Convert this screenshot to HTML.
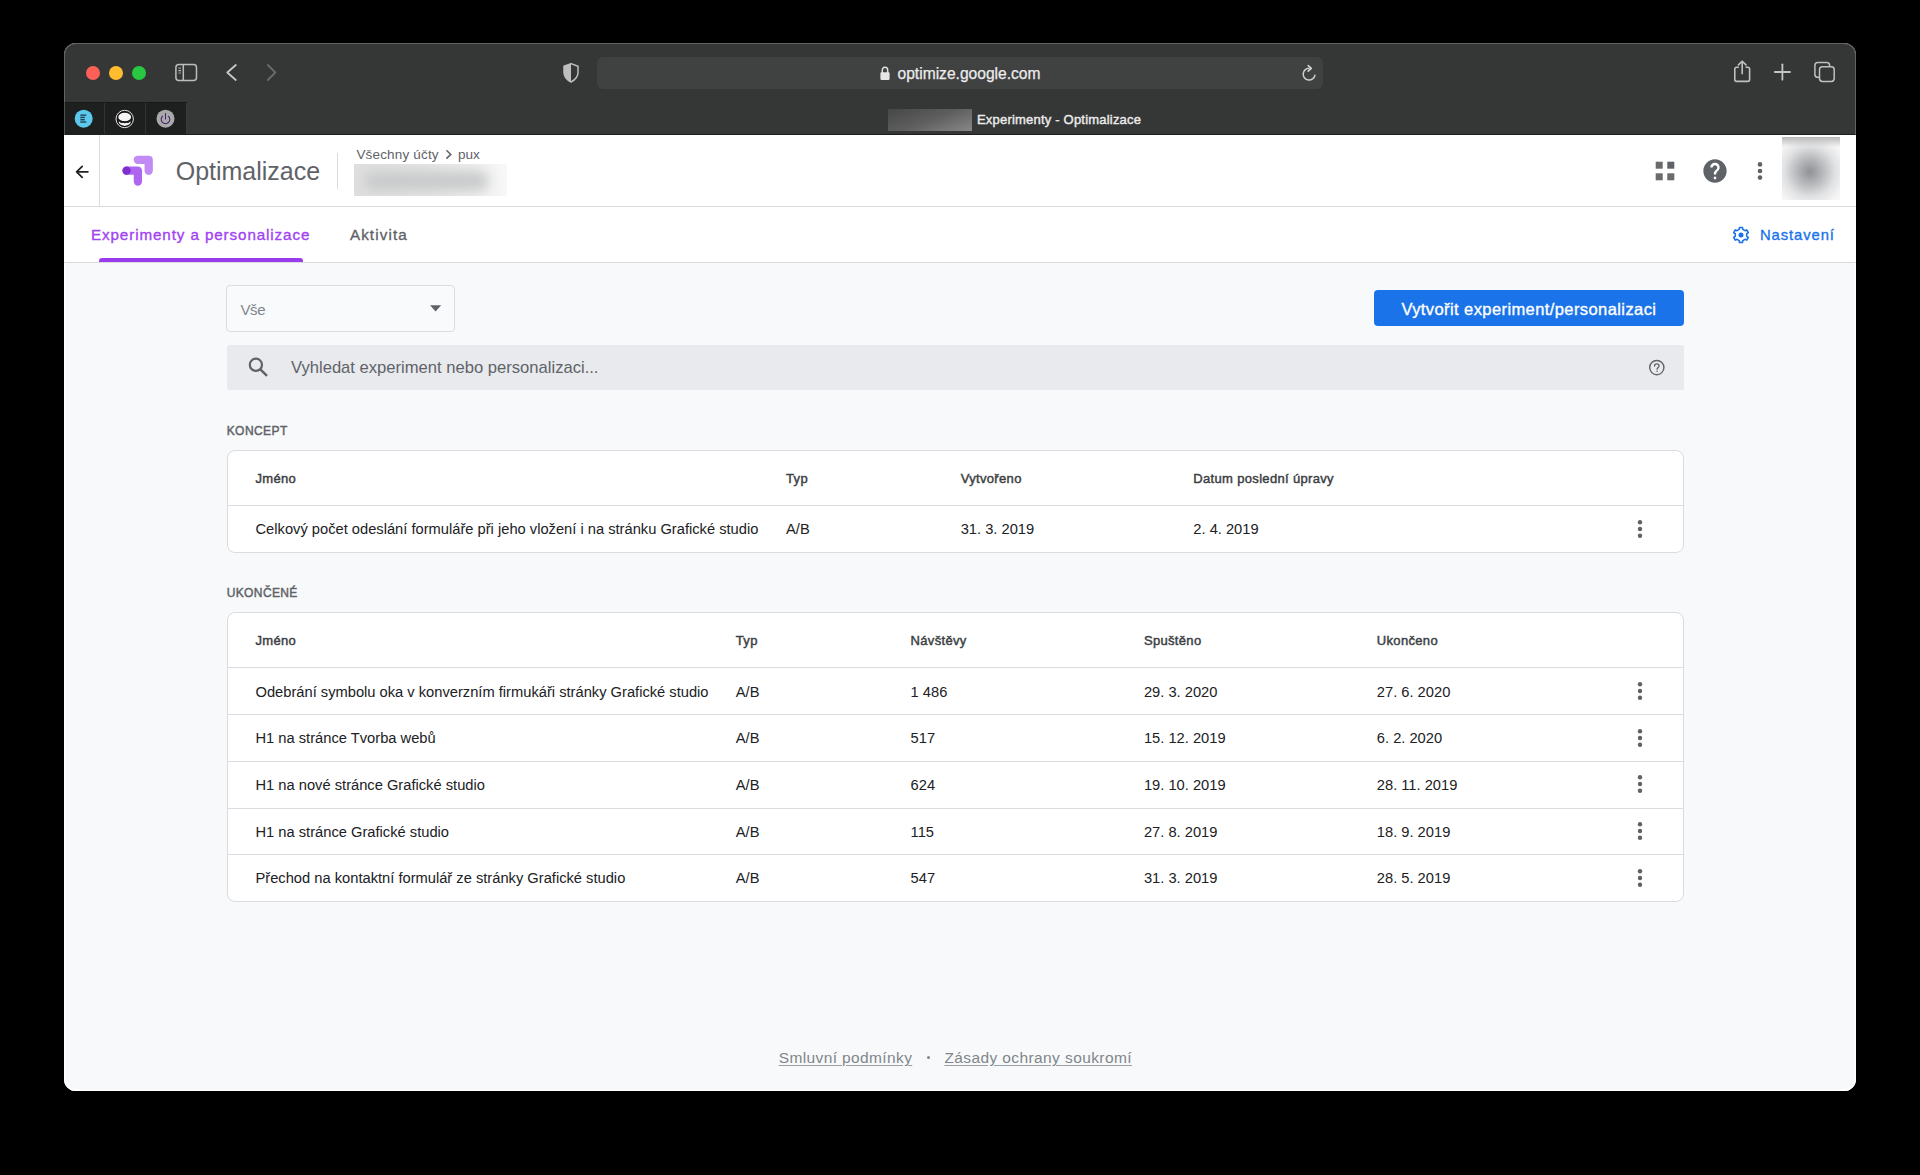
<!DOCTYPE html>
<html><head><meta charset="utf-8">
<style>
*{box-sizing:border-box;margin:0;padding:0}
html,body{width:1920px;height:1175px;background:#000;overflow:hidden;font-family:"Liberation Sans",sans-serif}
.abs{position:absolute}
.t{position:absolute;white-space:nowrap;line-height:1}
#win{position:absolute;left:0;top:0;width:1920px;height:1175px;clip-path:inset(43px 64px 84px 64px round 12px);background:#f8f9fa}
</style></head><body>
<div id="win">
<div class="abs" style="left:64px;top:43px;width:1792px;height:92px;background:#353636"></div>
<div class="abs" style="left:64px;top:134px;width:1792px;height:1px;background:#1c1c1c"></div>
<div class="abs" style="left:86.4px;top:66px;width:14px;height:14px;border-radius:50%;background:#fe5f57"></div>
<div class="abs" style="left:109.2px;top:66px;width:14px;height:14px;border-radius:50%;background:#febc2e"></div>
<div class="abs" style="left:132px;top:66px;width:14px;height:14px;border-radius:50%;background:#28c840"></div>
<svg class="abs" style="left:170px;top:58px" width="32" height="28" viewBox="0 0 32 28">
<rect x="5.9" y="6.4" width="20.6" height="16.2" rx="3" fill="none" stroke="#bdbdbd" stroke-width="1.5"/>
<line x1="13.3" y1="6.4" x2="13.3" y2="22.6" stroke="#bdbdbd" stroke-width="1.5"/>
<line x1="8.4" y1="10.2" x2="11" y2="10.2" stroke="#9a9a9a" stroke-width="1.2"/>
<line x1="8.4" y1="12.6" x2="11" y2="12.6" stroke="#bdbdbd" stroke-width="1.2"/>
<line x1="8.4" y1="15" x2="11" y2="15" stroke="#9a9a9a" stroke-width="1.2"/>
</svg>
<svg class="abs" style="left:220px;top:58px" width="64" height="28" viewBox="0 0 64 28">
<polyline points="15.8,7 7.3,14.5 15.8,22" fill="none" stroke="#c8c8c8" stroke-width="1.8" stroke-linecap="round" stroke-linejoin="round"/>
<polyline points="47.8,7 55.3,14.5 47.8,22" fill="none" stroke="#6b6b6b" stroke-width="1.8" stroke-linecap="round" stroke-linejoin="round"/>
</svg>
<svg class="abs" style="left:560px;top:60px" width="22" height="26" viewBox="0 0 22 26">
<path d="M11 3.6 L18 6.2 V12.5 C18 17 14.8 20 11 22 C7.2 20 4 17 4 12.5 V6.2 Z" fill="none" stroke="#bebebe" stroke-width="1.5" stroke-linejoin="round"/>
<path d="M11 3.6 L4 6.2 V12.5 C4 17 7.2 20 11 22 Z" fill="#bebebe"/>
</svg>
<div class="abs" style="left:597px;top:57px;width:726px;height:32px;border-radius:6px;background:#404141"></div>
<svg class="abs" style="left:878px;top:64px" width="14" height="18" viewBox="0 0 14 18">
<path d="M4.3 9 V6.2 C4.3 4.4 5.5 3.3 7 3.3 C8.5 3.3 9.7 4.4 9.7 6.2 V9" fill="none" stroke="#e0e0e0" stroke-width="1.5"/>
<rect x="2.4" y="8.3" width="9.2" height="7.7" rx="1.2" fill="#e6e6e6"/>
</svg>
<div class="t" style="left:897.5px;top:66.09px;font-size:15.6px;color:#ececec;-webkit-text-stroke:0.25px #ececec;">optimize.google.com</div>
<svg class="abs" style="left:1299px;top:64px" width="20" height="20" viewBox="0 0 20 20">
<path d="M15.9 11.3 A5.9 5.9 0 1 1 10.1 4.3" fill="none" stroke="#d0d0d0" stroke-width="1.5" stroke-linecap="round"/>
<path d="M9.2 1.5 L12.3 4.3 L9.2 7.1" fill="none" stroke="#d8d8d8" stroke-width="1.6" stroke-linecap="round" stroke-linejoin="round"/>
</svg>
<svg class="abs" style="left:1728px;top:56px" width="120" height="30" viewBox="0 0 120 30">
<path d="M10.9 11.3 H8.6 C7.4 11.3 6.8 11.9 6.8 13.1 V23.6 C6.8 24.8 7.4 25.4 8.6 25.4 H19.8 C21 25.4 21.6 24.8 21.6 23.6 V13.1 C21.6 11.9 21 11.3 19.8 11.3 H17.5" fill="none" stroke="#c0c0c0" stroke-width="1.6"/>
<line x1="14.2" y1="5.6" x2="14.2" y2="18.3" stroke="#c0c0c0" stroke-width="1.6"/>
<polyline points="10.4,8.9 14.2,5.2 18,8.9" fill="none" stroke="#c0c0c0" stroke-width="1.6" stroke-linecap="round" stroke-linejoin="round"/>
<line x1="54.4" y1="8.3" x2="54.4" y2="23.7" stroke="#c4c4c4" stroke-width="1.8" stroke-linecap="round"/>
<line x1="46.8" y1="16" x2="62" y2="16" stroke="#c4c4c4" stroke-width="1.8" stroke-linecap="round"/>
<path d="M91.5 21.3 H89.8 C87.8 21.3 86.9 20.3 86.9 18.4 V9.4 C86.9 7.5 87.8 6.5 89.8 6.5 H98.7 C100.6 6.5 101.6 7.5 101.6 9.4 V11" fill="none" stroke="#c0c0c0" stroke-width="1.5"/>
<rect x="91.5" y="10.8" width="14.7" height="14.7" rx="2.9" fill="none" stroke="#c0c0c0" stroke-width="1.5"/>
</svg>
<div class="abs" style="left:64px;top:102px;width:123px;height:33px;background:#1e1f1f;border-top:1px solid #181818"></div>
<div class="abs" style="left:104px;top:103px;width:1px;height:31px;background:#333"></div>
<div class="abs" style="left:145px;top:103px;width:1px;height:31px;background:#333"></div>
<div class="abs" style="left:186px;top:103px;width:1px;height:31px;background:#3a3a3a"></div>
<svg class="abs" style="left:74px;top:109px" width="20" height="20" viewBox="0 0 20 20">
<circle cx="9.7" cy="9.7" r="9" fill="#5bc8ec"/>
<rect x="6.3" y="5.5" width="6" height="1.3" fill="#1d3a4a"/><rect x="6.3" y="7.8" width="4.5" height="1.3" fill="#1d3a4a"/>
<rect x="6.3" y="10.1" width="4.5" height="1.3" fill="#1d3a4a"/><rect x="6.3" y="12.4" width="6" height="1.3" fill="#1d3a4a"/>
</svg>
<svg class="abs" style="left:114px;top:109px" width="22" height="20" viewBox="0 0 22 20">
<circle cx="10.7" cy="10" r="8.7" fill="#151515" stroke="#e0e0e0" stroke-width="1"/>
<ellipse cx="10.7" cy="8" rx="6.4" ry="4.3" fill="#f4f4f4"/>
<path d="M4.6 12.6 Q10.7 15 16.8 12.6 Q16.4 16.2 10.7 17 Q5 16.2 4.6 12.6 Z" fill="#f0f0f0"/>
<path d="M6 13.2 Q7.5 14.6 9 13.6 Q10.6 14.8 12.3 13.6 Q14 14.6 15.4 13.2 L15.4 12.6 L6 12.6 Z" fill="#151515"/>
</svg>
<svg class="abs" style="left:155px;top:109px" width="20" height="20" viewBox="0 0 20 20">
<circle cx="10.5" cy="9.7" r="9" fill="#a9a9a9"/>
<path d="M7.6 7.2 A4.3 4.3 0 1 0 13.4 7.2" fill="none" stroke="#43266a" stroke-width="1.05" stroke-linecap="round"/>
<line x1="10.5" y1="4.4" x2="10.5" y2="10" stroke="#43266a" stroke-width="1.05" stroke-linecap="round"/>
</svg>
<div class="abs" style="left:888px;top:109px;width:84px;height:22px;background:linear-gradient(160deg,#474747 0%,#5e5e5e 50%,#888 100%);filter:blur(0.6px)"></div>
<div class="t" style="left:977.0px;top:112.60px;font-size:13px;color:#ececec;letter-spacing:0.2px;-webkit-text-stroke:0.4px #ececec;">Experimenty - Optimalizace</div>
<div class="abs" style="left:64px;top:135px;width:1792px;height:72px;background:#fff;border-bottom:1px solid #dadce0"></div>
<div class="abs" style="left:99px;top:135px;width:1px;height:71px;background:#dadce0"></div>
<svg class="abs" style="left:70px;top:160px" width="24" height="24" viewBox="0 0 24 24">
<path d="M17.9 11.8 H6.6 M12.2 6.3 L6.6 11.8 L12.2 17.4" fill="none" stroke="#202124" stroke-width="1.7" stroke-linecap="round" stroke-linejoin="round"/>
</svg>
<svg class="abs" style="left:115px;top:150px" width="45" height="42" viewBox="115 150 45 42">
<path d="M137.8 159.8 H148.7 V170.7" fill="none" stroke="#c18af4" stroke-width="8.3" stroke-linecap="round" stroke-linejoin="round"/>
<path d="M126.5 170.7 H137.9 V181.5" fill="none" stroke="#ae66f1" stroke-width="8.3" stroke-linecap="round" stroke-linejoin="round"/>
<circle cx="126.6" cy="170.6" r="4.15" fill="#7f2fcf"/>
</svg>
<div class="t" style="left:175.7px;top:158.84px;font-size:25px;color:#5f6368;">Optimalizace</div>
<div class="abs" style="left:337px;top:153px;width:1px;height:36px;background:#dadce0"></div>
<div class="t" style="left:356.4px;top:147.87px;font-size:13.5px;color:#5f6368;letter-spacing:0.17px;">Všechny účty</div>
<svg class="abs" style="left:444px;top:148px" width="10" height="13" viewBox="0 0 10 13"><polyline points="2.4,2.2 6.8,6.4 2.4,10.6" fill="none" stroke="#5f6368" stroke-width="1.5"/></svg>
<div class="t" style="left:458.0px;top:147.87px;font-size:13.5px;color:#5f6368;">pux</div>
<div class="abs" style="left:354px;top:164px;width:153px;height:32px;overflow:hidden;background:linear-gradient(90deg,#dedede 0%,#e6e6e6 50%,#f0f0f0 80%,#f8f8f8 100%)"><div style="position:absolute;left:10px;top:7px;width:125px;height:20px;border-radius:10px;background:#cacbcc;filter:blur(6px)"></div></div>
<svg class="abs" style="left:1652px;top:158px" width="26" height="26" viewBox="0 0 26 26">
<rect x="3.7" y="3.7" width="7" height="7" fill="#6b6b6b"/><rect x="15.3" y="3.7" width="7" height="7" fill="#5f6368"/>
<rect x="3.7" y="15.3" width="7" height="7" fill="#6b6b6b"/><rect x="15.3" y="15.3" width="7" height="7" fill="#6b6b6b"/>
</svg>
<svg class="abs" style="left:1701px;top:156.7px" width="28" height="28" viewBox="0 0 24 24"><path fill="#5f6368" d="M12 2C6.48 2 2 6.48 2 12s4.48 10 10 10 10-4.48 10-10S17.52 2 12 2zm1 17h-2v-2h2v2zm2.07-7.750l-.9.92C13.450 12.9 13 13.5 13 15h-2v-.5c0-1.1.45-2.1 1.17-2.83l1.24-1.26c.37-.36.59-.86.59-1.41 0-1.1-.9-2-2-2s-2 .9-2 2H8c0-2.21 1.79-4 4-4s4 1.79 4 4c0 .88-.36 1.68-.93 2.25z"/></svg>
<svg class="abs" style="left:1756.30px;top:160.00px" width="8" height="22" viewBox="0 0 8 22"><circle cx="4" cy="4.4" r="2.3" fill="#5f6368"/><circle cx="4" cy="11" r="2.3" fill="#5f6368"/><circle cx="4" cy="17.6" r="2.3" fill="#5f6368"/></svg>
<div class="abs" style="left:1782px;top:137px;width:58px;height:63px;background:radial-gradient(circle at 48% 55%,#8f9296 0%,#b6b8bb 28%,#e0e1e2 55%,#f6f6f6 80%);"></div>
<div class="abs" style="left:1782px;top:137px;width:58px;height:10px;background:linear-gradient(#b8b8b8,rgba(220,220,220,0))"></div>
<div class="abs" style="left:64px;top:207px;width:1792px;height:56px;background:#fff;border-bottom:1px solid #dadce0"></div>
<div class="t" style="left:91.0px;top:227.33px;font-size:15.2px;color:#a142f4;letter-spacing:0.9px;-webkit-text-stroke:0.35px #a142f4;">Experimenty a personalizace</div>
<div class="abs" style="left:99px;top:258px;width:204px;height:4px;background:#9a3ced;border-radius:3px 3px 0 0"></div>
<div class="t" style="left:349.9px;top:227.33px;font-size:15.2px;color:#5f6368;letter-spacing:1.12px;-webkit-text-stroke:0.35px #5f6368;">Aktivita</div>
<svg class="abs" style="left:1730px;top:223.5px" width="22" height="22" viewBox="0 0 22 22"><path d="M9.26 5.36 L9.47 3.45 L12.53 3.45 L12.74 5.36 L15.01 6.67 L16.77 5.90 L18.30 8.55 L16.75 9.69 L16.75 12.31 L18.30 13.45 L16.77 16.10 L15.01 15.33 L12.74 16.64 L12.53 18.55 L9.47 18.55 L9.26 16.64 L6.99 15.33 L5.23 16.10 L3.70 13.45 L5.25 12.31 L5.25 9.69 L3.70 8.55 L5.23 5.90 L6.99 6.67 Z" fill="none" stroke="#1a73e8" stroke-width="1.6" stroke-linejoin="round"/><circle cx="11" cy="11" r="2.5" fill="#1a73e8"/></svg>
<div class="t" style="left:1760.0px;top:227.67px;font-size:14.8px;color:#1a73e8;letter-spacing:0.92px;-webkit-text-stroke:0.35px #1a73e8;">Nastavení</div>
<div class="abs" style="left:226px;top:285px;width:229px;height:47px;border:1px solid #dadce0;border-radius:4px;background:#f9fafb"></div>
<div class="t" style="left:240.5px;top:301.70px;font-size:15px;color:#80868b;letter-spacing:-0.4px;">Vše</div>
<svg class="abs" style="left:429px;top:304px" width="13" height="9" viewBox="0 0 13 9"><path d="M1 1.2 H12.2 L6.6 7.6 Z" fill="#5f6368"/></svg>
<div class="abs" style="left:1374px;top:290px;width:310px;height:36px;border-radius:4px;background:#1a73e8"></div>
<div class="t" style="left:1401.4px;top:301.03px;font-size:16.5px;color:#ffffff;letter-spacing:0.41px;-webkit-text-stroke:0.35px #fff;">Vytvořit experiment/personalizaci</div>
<div class="abs" style="left:227px;top:345px;width:1457px;height:45px;border-radius:2px;background:#e8eaed"></div>
<svg class="abs" style="left:244px;top:353px" width="28" height="28" viewBox="0 0 28 28">
<circle cx="11.9" cy="11.8" r="6.1" fill="none" stroke="#5f6368" stroke-width="2.2"/>
<line x1="16.4" y1="16.3" x2="23" y2="22.9" stroke="#5f6368" stroke-width="2.4"/>
</svg>
<div class="t" style="left:291.0px;top:360.45px;font-size:16.6px;color:#5f6368;">Vyhledat experiment nebo personalizaci...</div>
<svg class="abs" style="left:1646px;top:357px" width="22" height="22" viewBox="0 0 22 22">
<circle cx="10.8" cy="10.6" r="7.1" fill="none" stroke="#5f6368" stroke-width="1.4"/>
<path d="M8.5 9.1 C8.5 7.7 9.6 6.9 10.8 6.9 C12 6.9 13.1 7.7 13.1 8.9 C13.1 10.4 11.1 10.6 11.1 12.2" fill="none" stroke="#5f6368" stroke-width="1.3" stroke-linecap="round"/>
<circle cx="11.1" cy="14.2" r="0.8" fill="#5f6368"/>
</svg>
<div class="t" style="left:226.7px;top:424.84px;font-size:12px;color:#5f6368;letter-spacing:0.43px;-webkit-text-stroke:0.45px #5f6368;">KONCEPT</div>
<div class="t" style="left:226.7px;top:587.24px;font-size:12px;color:#5f6368;letter-spacing:0.38px;-webkit-text-stroke:0.45px #5f6368;">UKONČENÉ</div>
<div class="abs" style="left:227px;top:450px;width:1457px;height:103px;border:1px solid #dadce0;border-radius:8px;background:#fff"></div>
<div class="abs" style="left:228px;top:505px;width:1455px;height:1px;background:#dadce0"></div>
<div class="t" style="left:255.5px;top:471.90px;font-size:13px;color:#3c4043;letter-spacing:0.33px;-webkit-text-stroke:0.45px #3c4043;">Jméno</div>
<div class="t" style="left:786.0px;top:471.90px;font-size:13px;color:#3c4043;letter-spacing:0.33px;-webkit-text-stroke:0.45px #3c4043;">Typ</div>
<div class="t" style="left:960.7px;top:471.90px;font-size:13px;color:#3c4043;letter-spacing:0.33px;-webkit-text-stroke:0.45px #3c4043;">Vytvořeno</div>
<div class="t" style="left:1193.3px;top:471.90px;font-size:13px;color:#3c4043;letter-spacing:0.33px;-webkit-text-stroke:0.45px #3c4043;">Datum poslední úpravy</div>
<div class="t" style="left:255.5px;top:522.06px;font-size:14.7px;color:#202124;">Celkový počet odeslání formuláře při jeho vložení i na stránku Grafické studio</div>
<div class="t" style="left:786.0px;top:522.06px;font-size:14.7px;color:#202124;">A/B</div>
<div class="t" style="left:960.7px;top:522.06px;font-size:14.7px;color:#202124;">31. 3. 2019</div>
<div class="t" style="left:1193.3px;top:522.06px;font-size:14.7px;color:#202124;">2. 4. 2019</div>
<svg class="abs" style="left:1635.80px;top:518.40px" width="8" height="22" viewBox="0 0 8 22"><circle cx="4" cy="4.2" r="2.2" fill="#616161"/><circle cx="4" cy="11" r="2.2" fill="#616161"/><circle cx="4" cy="17.8" r="2.2" fill="#616161"/></svg>
<div class="abs" style="left:227px;top:612px;width:1457px;height:290px;border:1px solid #dadce0;border-radius:8px;background:#fff"></div>
<div class="abs" style="left:228px;top:667px;width:1455px;height:1px;background:#dadce0"></div>
<div class="abs" style="left:228px;top:714px;width:1455px;height:1px;background:#dadce0"></div>
<div class="abs" style="left:228px;top:761px;width:1455px;height:1px;background:#dadce0"></div>
<div class="abs" style="left:228px;top:808px;width:1455px;height:1px;background:#dadce0"></div>
<div class="abs" style="left:228px;top:854px;width:1455px;height:1px;background:#dadce0"></div>
<div class="t" style="left:255.5px;top:634.10px;font-size:13px;color:#3c4043;letter-spacing:0.33px;-webkit-text-stroke:0.45px #3c4043;">Jméno</div>
<div class="t" style="left:735.8px;top:634.10px;font-size:13px;color:#3c4043;letter-spacing:0.33px;-webkit-text-stroke:0.45px #3c4043;">Typ</div>
<div class="t" style="left:910.6px;top:634.10px;font-size:13px;color:#3c4043;letter-spacing:0.33px;-webkit-text-stroke:0.45px #3c4043;">Návštěvy</div>
<div class="t" style="left:1143.9px;top:634.10px;font-size:13px;color:#3c4043;letter-spacing:0.33px;-webkit-text-stroke:0.45px #3c4043;">Spuštěno</div>
<div class="t" style="left:1376.8px;top:634.10px;font-size:13px;color:#3c4043;letter-spacing:0.33px;-webkit-text-stroke:0.45px #3c4043;">Ukončeno</div>
<div class="t" style="left:255.5px;top:684.56px;font-size:14.7px;color:#202124;">Odebrání symbolu oka v konverzním firmukáři stránky Grafické studio</div>
<div class="t" style="left:735.8px;top:684.56px;font-size:14.7px;color:#202124;">A/B</div>
<div class="t" style="left:910.6px;top:684.56px;font-size:14.7px;color:#202124;">1 486</div>
<div class="t" style="left:1143.9px;top:684.56px;font-size:14.7px;color:#202124;">29. 3. 2020</div>
<div class="t" style="left:1376.8px;top:684.56px;font-size:14.7px;color:#202124;">27. 6. 2020</div>
<svg class="abs" style="left:1635.80px;top:680.00px" width="8" height="22" viewBox="0 0 8 22"><circle cx="4" cy="4.2" r="2.2" fill="#616161"/><circle cx="4" cy="11" r="2.2" fill="#616161"/><circle cx="4" cy="17.8" r="2.2" fill="#616161"/></svg>
<div class="t" style="left:255.5px;top:731.26px;font-size:14.7px;color:#202124;">H1 na stránce Tvorba webů</div>
<div class="t" style="left:735.8px;top:731.26px;font-size:14.7px;color:#202124;">A/B</div>
<div class="t" style="left:910.6px;top:731.26px;font-size:14.7px;color:#202124;">517</div>
<div class="t" style="left:1143.9px;top:731.26px;font-size:14.7px;color:#202124;">15. 12. 2019</div>
<div class="t" style="left:1376.8px;top:731.26px;font-size:14.7px;color:#202124;">6. 2. 2020</div>
<svg class="abs" style="left:1635.80px;top:726.70px" width="8" height="22" viewBox="0 0 8 22"><circle cx="4" cy="4.2" r="2.2" fill="#616161"/><circle cx="4" cy="11" r="2.2" fill="#616161"/><circle cx="4" cy="17.8" r="2.2" fill="#616161"/></svg>
<div class="t" style="left:255.5px;top:777.96px;font-size:14.7px;color:#202124;">H1 na nové stránce Grafické studio</div>
<div class="t" style="left:735.8px;top:777.96px;font-size:14.7px;color:#202124;">A/B</div>
<div class="t" style="left:910.6px;top:777.96px;font-size:14.7px;color:#202124;">624</div>
<div class="t" style="left:1143.9px;top:777.96px;font-size:14.7px;color:#202124;">19. 10. 2019</div>
<div class="t" style="left:1376.8px;top:777.96px;font-size:14.7px;color:#202124;">28. 11. 2019</div>
<svg class="abs" style="left:1635.80px;top:773.40px" width="8" height="22" viewBox="0 0 8 22"><circle cx="4" cy="4.2" r="2.2" fill="#616161"/><circle cx="4" cy="11" r="2.2" fill="#616161"/><circle cx="4" cy="17.8" r="2.2" fill="#616161"/></svg>
<div class="t" style="left:255.5px;top:824.66px;font-size:14.7px;color:#202124;">H1 na stránce Grafické studio</div>
<div class="t" style="left:735.8px;top:824.66px;font-size:14.7px;color:#202124;">A/B</div>
<div class="t" style="left:910.6px;top:824.66px;font-size:14.7px;color:#202124;">115</div>
<div class="t" style="left:1143.9px;top:824.66px;font-size:14.7px;color:#202124;">27. 8. 2019</div>
<div class="t" style="left:1376.8px;top:824.66px;font-size:14.7px;color:#202124;">18. 9. 2019</div>
<svg class="abs" style="left:1635.80px;top:820.10px" width="8" height="22" viewBox="0 0 8 22"><circle cx="4" cy="4.2" r="2.2" fill="#616161"/><circle cx="4" cy="11" r="2.2" fill="#616161"/><circle cx="4" cy="17.8" r="2.2" fill="#616161"/></svg>
<div class="t" style="left:255.5px;top:871.36px;font-size:14.7px;color:#202124;">Přechod na kontaktní formulář ze stránky Grafické studio</div>
<div class="t" style="left:735.8px;top:871.36px;font-size:14.7px;color:#202124;">A/B</div>
<div class="t" style="left:910.6px;top:871.36px;font-size:14.7px;color:#202124;">547</div>
<div class="t" style="left:1143.9px;top:871.36px;font-size:14.7px;color:#202124;">31. 3. 2019</div>
<div class="t" style="left:1376.8px;top:871.36px;font-size:14.7px;color:#202124;">28. 5. 2019</div>
<svg class="abs" style="left:1635.80px;top:866.80px" width="8" height="22" viewBox="0 0 8 22"><circle cx="4" cy="4.2" r="2.2" fill="#616161"/><circle cx="4" cy="11" r="2.2" fill="#616161"/><circle cx="4" cy="17.8" r="2.2" fill="#616161"/></svg>
<div class="t" style="left:778.7px;top:1050.38px;font-size:15.5px;color:#80868b;letter-spacing:0.38px;text-decoration:underline;text-decoration-color:#9aa0a6;text-underline-offset:2px;">Smluvní podmínky</div>
<div class="abs" style="left:926.5px;top:1056.2px;width:3px;height:3px;border-radius:50%;background:#80868b"></div>
<div class="t" style="left:944.4px;top:1050.38px;font-size:15.5px;color:#80868b;letter-spacing:0.4px;text-decoration:underline;text-decoration-color:#9aa0a6;text-underline-offset:2px;">Zásady ochrany soukromí</div>
</div>
<div class="abs" style="left:64px;top:43px;width:1792px;height:1048px;border-radius:12px;border:1.2px solid rgba(255,255,255,.22);pointer-events:none"></div>
<div class="abs" style="left:64px;top:263px;width:1792px;height:828px;border-radius:0 0 12px 12px;box-shadow:inset 0 -1.5px 0 #fff, inset 1.5px 0 0 #fff, inset -1.5px 0 0 #fff;pointer-events:none"></div>
</body></html>
